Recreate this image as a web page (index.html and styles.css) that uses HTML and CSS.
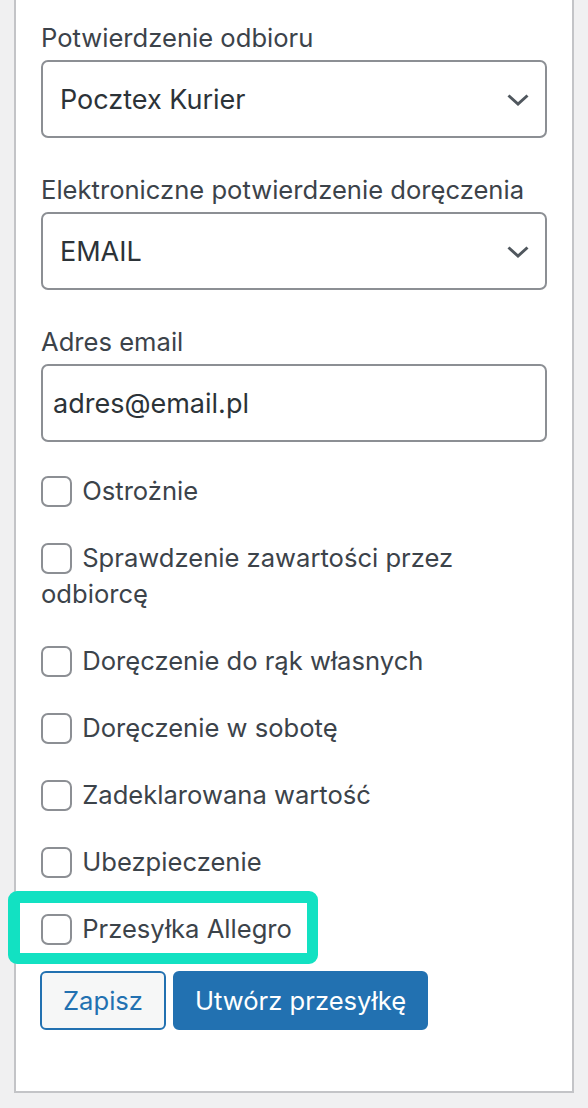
FILE: index.html
```html
<!DOCTYPE html>
<html lang="pl">
<head>
<meta charset="utf-8">
<title>Pocztex</title>
<link rel="stylesheet" href="styles.css">
</head>
<body>
<div class="panel">
  <div class="field">
    <label class="field-label">Potwierdzenie odbioru</label>
    <div class="select">
      <span>Pocztex Kurier</span>
      <svg class="chevron" width="24" height="14" viewBox="0 0 24 14"><path d="M2.5 2.5 L12 11 L21.5 2.5" fill="none" stroke="#50575e" stroke-width="3"/></svg>
    </div>
  </div>
  <div class="field">
    <label class="field-label">Elektroniczne potwierdzenie doręczenia</label>
    <div class="select">
      <span>EMAIL</span>
      <svg class="chevron" width="24" height="14" viewBox="0 0 24 14"><path d="M2.5 2.5 L12 11 L21.5 2.5" fill="none" stroke="#50575e" stroke-width="3"/></svg>
    </div>
  </div>
  <div class="field">
    <label class="field-label">Adres email</label>
    <div class="input">adres@email.pl</div>
  </div>
  <div class="checks">
    <label class="check"><input type="checkbox"> Ostrożnie</label>
    <label class="check"><input type="checkbox"> Sprawdzenie zawartości przez odbiorcę</label>
    <label class="check"><input type="checkbox"> Doręczenie do rąk własnych</label>
    <label class="check"><input type="checkbox"> Doręczenie w sobotę</label>
    <label class="check"><input type="checkbox"> Zadeklarowana wartość</label>
    <label class="check"><input type="checkbox"> Ubezpieczenie</label>
    <label class="check highlighted"><input type="checkbox"> Przesyłka Allegro<span class="ring"></span></label>
  </div>
  <div class="actions">
    <button class="btn btn-secondary">Zapisz</button>
    <button class="btn btn-primary">Utwórz przesyłkę</button>
  </div>
</div>
</body>
</html>
```
FILE: styles.css
```css
* { box-sizing: border-box; }
html, body { margin: 0; padding: 0; }
body {
  background: #f0f0f1;
  font-family: Inter, "Noto Sans", sans-serif;
  color: #3c434a;
  width: 588px;
  height: 1108px;
  overflow: hidden;
}
.panel {
  margin-left: 14px;
  width: 560px;
  background: #fff;
  border: 2px solid #c3c4c7;
  border-top: 0;
  padding: 20px 25px 61px 25px;
}
.field { margin-bottom: 34px; }
.field-label {
  display: block;
  font-size: 25.6px;
  line-height: 36px;
  margin-bottom: 4px;
  color: #3c434a;
}
.select, .input {
  height: 78px;
  border: 2px solid #8c8f94;
  border-radius: 7px;
  font-size: 27px;
  color: #2c3338;
  display: flex;
  align-items: center;
}
.select {
  justify-content: space-between;
  padding: 0 15px 0 17px;
}
.input { padding: 0 10px; }
.chevron { display: block; margin-top: 2px; }
.checks {
  display: flex;
  flex-direction: column;
  gap: 31px;
  margin-top: -3px;
}
.check {
  display: block;
  font-size: 25.6px;
  line-height: 36px;
  color: #3c434a;
}
.check input {
  appearance: none;
  -webkit-appearance: none;
  width: 31px;
  height: 31px;
  border: 2px solid #8c8f94;
  border-radius: 7px;
  background: #fff;
  margin: 0 3px 0 0;
  vertical-align: middle;
  position: relative;
  top: -2px;
}
.highlighted { position: relative; }
.ring {
  position: absolute;
  left: -33px;
  top: -20px;
  width: 310px;
  height: 73px;
  border: 12px solid #12e1c2;
  border-right-width: 11px;
  border-bottom-width: 11px;
  border-radius: 9px;
  pointer-events: none;
}
.actions {
  display: flex;
  gap: 7px;
  margin-top: 24px;
  margin-left: -1px;
}
.btn {
  height: 59px;
  border-radius: 6px;
  font-family: Inter, "Noto Sans", sans-serif;
  font-size: 25.6px;
  padding: 0 20px;
  border: 2px solid #2271b1;
  cursor: pointer;
}
.btn-secondary { background: #f6f7f7; color: #2271b1; padding: 0 21px; }
.btn-primary { background: #2271b1; color: #fff; padding: 0 20px; }
```
